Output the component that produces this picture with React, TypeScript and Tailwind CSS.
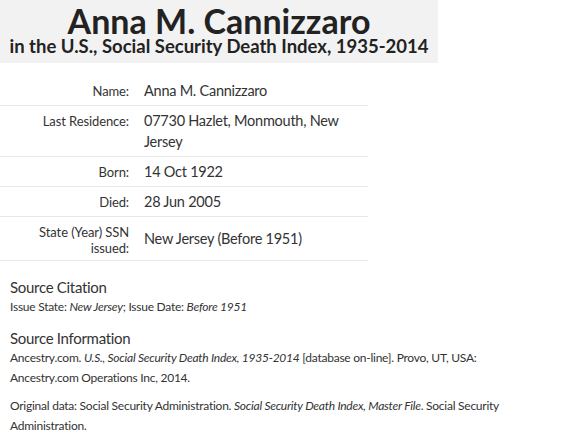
import React from 'react';

interface Fact {
    label: React.ReactNode;
    value: React.ReactNode;
}

const facts: Fact[] = [
    { label: 'Name:', value: 'Anna M. Cannizzaro' },
    { label: 'Last Residence:', value: <>07730 Hazlet, Monmouth, New<br />Jersey</> },
    { label: 'Born:', value: '14 Oct 1922' },
    { label: 'Died:', value: '28 Jun 2005' },
    { label: <>State (Year) SSN<br />issued:</>, value: 'New Jersey (Before 1951)' },
];

export default function App() {
    return (
        <div className="w-[582px] h-[442px] bg-white text-[#333] font-['Lato',sans-serif] overflow-hidden">
            <div className="w-[438px] h-[63px] bg-[#f2f2f2] flex flex-col items-center">
                <h1 className="text-[34px] leading-[36px] pt-[3px] font-bold text-[#222]">Anna M. Cannizzaro</h1>
                <h2 className="text-[18.5px] leading-[20px] -mt-[3px] font-bold text-[#222]">
                    in the U.S., Social Security Death Index, 1935-2014
                </h2>
            </div>

            <table className="w-[368px] mt-[13px] border-collapse">
                <tbody>
                    {facts.map((f, i) => (
                        <tr key={i} className="border-b border-[#e8e8e8]">
                            <th className="w-[137px] pr-[8px] pt-[7px] pb-[4px] text-right align-top font-normal text-[13px] leading-[16px] tracking-[-0.1px]">
                                {f.label}
                            </th>
                            <td className="pl-[7px] py-[4px] align-middle text-[14.5px] leading-[21px] tracking-[-0.25px]">
                                {f.value}
                            </td>
                        </tr>
                    ))}
                </tbody>
            </table>

            <div className="px-[10px] mt-[16px] w-[540px]">
                <h3 className="text-[15px] leading-[20px] tracking-[-0.3px]">Source Citation</h3>
                <p className="text-[12px] leading-[20px] tracking-[-0.25px]">
                    Issue State: <em>New Jersey</em>; Issue Date: <em>Before 1951</em>
                </p>

                <h3 className="text-[15px] leading-[20px] tracking-[-0.3px] mt-[11px]">Source Information</h3>
                <p className="text-[12px] leading-[20px] tracking-[-0.25px]">
                    Ancestry.com. <em>U.S., Social Security Death Index, 1935-2014</em> [database on-line]. Provo, UT, USA: Ancestry.com Operations Inc, 2014.
                </p>
                <p className="text-[12px] leading-[20px] tracking-[-0.25px] mt-[8px]">
                    Original data: Social Security Administration. <em>Social Security Death Index, Master File</em>. Social Security Administration.
                </p>
            </div>
        </div>
    );
}
